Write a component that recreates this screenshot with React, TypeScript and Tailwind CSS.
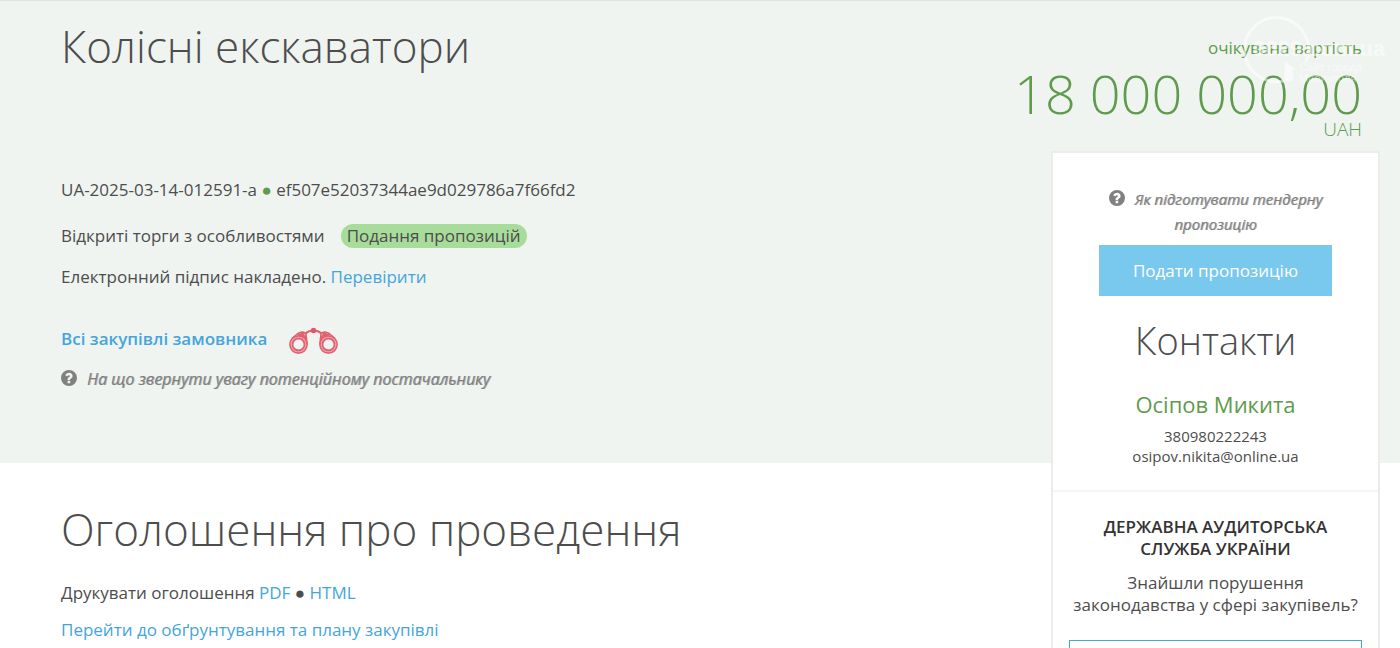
import React from "react";

const link = "text-[#45a5dc] hover:underline";

function QuestionIcon() {
  return (
    <svg viewBox="0 0 16 16" className="inline-block size-4 align-[-1px] text-[#808080]" fill="currentColor" aria-hidden="true">
      <path
        fillRule="evenodd"
        d="M8 0a8 8 0 1 1 0 16A8 8 0 0 1 8 0ZM6.600 10.800v2.400h2.600v-2.400H6.600ZM4.300 5.300l2 1.100c.3-.8.8-1.200 1.500-1.200.7 0 1.100.3 1.100.8 0 .5-.3.800-1 1.200-.9.500-1.300 1.100-1.300 2v.7h2.500v-.4c0-.4.3-.6.9-1 .9-.5 1.600-1.300 1.600-2.500C11.600 4 10.200 2.700 8.100 2.700c-1.800 0-3.100.9-3.800 2.600Z"
      />
    </svg>
  );
}

function Binoculars() {
  return (
    <svg viewBox="0 0 50 28" className="h-7 w-[50px]" fill="none" stroke="#e2606f" aria-hidden="true">
      <circle cx="9.500" cy="17.500" r="8.600" strokeWidth="1.600" />
      <circle cx="9.500" cy="17.500" r="6" strokeWidth="1.800" />
      <circle cx="39.500" cy="17.500" r="8.600" strokeWidth="1.600" />
      <circle cx="39.500" cy="17.500" r="6" strokeWidth="1.800" />
      <circle cx="9.500" cy="17.500" r="7.400" strokeWidth="1" strokeOpacity="0.5" />
      <circle cx="39.500" cy="17.500" r="7.400" strokeWidth="1" strokeOpacity="0.5" />
      <path strokeWidth="1.600" d="M3 11.500 9 6.500c3-2 7-2 8 1l1 10M46 11.500l-6-5c-3-2-7-2-8 1l-1 10" />
      <path strokeWidth="2.400" d="M9 8c4-1 7 1 8.500 4.500M40 8c-4-1-7 1-8.500 4.500M11.500 6l4 1.500M37.500 6l-4 1.500" />
      <path strokeWidth="2" d="M16.500 6.500c2-1.800 4.500-3 8-3s6 1.200 8 3" />
      <circle cx="24.500" cy="3.500" r="2.700" fill="#e0566a" stroke="none" />
    </svg>
  );
}

function Watermark() {
  return (
    <div className="pointer-events-none absolute top-4 right-[10px] font-['Liberation_Sans',sans-serif] text-white/50">
      <svg viewBox="0 0 146 70" className="h-[70px] w-[146px]" fill="none" aria-hidden="true">
        <path d="M44 63.500A32 32 0 1 1 62 46" stroke="currentColor" strokeWidth="3" />
        <path d="m41 46 11 7-4 1 2 8-4 4-6-4Z" fill="currentColor" />
        <text x="9" y="40" fontSize="22" fontWeight="700" fill="currentColor">0629.com.ua</text>
        <text x="55" y="55" fontSize="11" fill="currentColor">Сайт города</text>
        <text x="55" y="66" fontSize="11" fill="currentColor">Мариуполя</text>
      </svg>
    </div>
  );
}

export default function App() {
  return (
    <div className="relative grid grid-cols-[minmax(0,1fr)_366px] overflow-x-clip bg-white font-['Open_Sans','Noto_Sans',sans-serif] text-[17px] leading-6 text-[#4d4d4d]">
      <header className="col-span-2 col-start-1 row-start-1 border-t border-[#e0e3e1] bg-[#eff4f1] pt-[15px] pr-[380px] pb-[72px] pl-[61px]">
        <h1 className="text-[44px] leading-[60px] font-light">Колісні екскаватори</h1>
        <p className="mt-[102px]">
          UA-2025-03-14-012591-a <span className="text-[#5f9b4c]">●</span> ef507e52037344ae9d029786a7f66fd2
        </p>
        <p className="mt-[22px]">
          Відкриті торги з особливостями
          <span className="ml-4 inline-block rounded-full bg-[#a8dc9a] px-[6px]">Подання пропозицій</span>
        </p>
        <p className="mt-[17px]">
          Електронний підпис накладено. <a href="#verify" className={link}>Перевірити</a>
        </p>
        <div className="mt-9 flex items-start gap-[22px]">
          <a href="#customer" className="mt-[2px] font-semibold text-[#45a5dc] hover:underline">Всі закупівлі замовника</a>
          <div className="pt-[2px]"><Binoculars /></div>
        </div>
        <p className="mt-3 text-base leading-6 font-medium text-[#808080] italic">
          <QuestionIcon />
          <a href="#attention" className="ml-[10px] [text-shadow:1px_0_0_#80808099]">На що звернути увагу потенційному постачальнику</a>
        </p>
      </header>

      <main className="col-start-1 row-start-2 pt-9 pb-8 pl-[61px]">
        <h2 className="text-[44px] leading-[60px] font-light">Оголошення про проведення</h2>
        <p className="mt-[22px]">
          Друкувати оголошення <a href="#pdf" className={link}>PDF</a> ● <a href="#html" className={link}>HTML</a>
        </p>
        <p className="mt-[13px]">
          <a href="#plan" className={link}>Перейти до обґрунтування та плану закупівлі</a>
        </p>
      </main>

      <aside className="col-start-2 row-span-2 row-start-1 h-0 min-h-full">
        <div className="flex flex-col items-end pt-9 pr-[38px] text-[#5f9b4c]">
          <p>очікувана вартість</p>
          <p className="text-[54px] leading-[66px] font-light whitespace-nowrap">18 000 000,00</p>
          <p className="-mt-[7px] text-[19px] leading-5 font-light">UAH</p>
        </div>
        <div className="mt-3 mr-5 ml-[17px] border-2 border-[#ebedec] bg-white text-center">
          <section className="border-b-2 border-[#f5f5f5] px-[46px] pt-[34px] pb-6">
            <p className="text-[15px] leading-[25px] font-medium text-[#808080] italic">
              <QuestionIcon />
              <a href="#prepare" className="ml-[10px] [text-shadow:1px_0_0_#80808099]">Як підготувати тендерну пропозицію</a>
            </p>
            <button type="button" className="mt-2 h-[51px] w-full cursor-pointer bg-[#79c8ee] text-white">Подати пропозицію</button>
            <h2 className="mt-[18px] text-[38px] leading-[52px] font-light">Контакти</h2>
            <h3 className="mt-[22px] text-[22px] leading-8 text-[#5f9b4c]">Осіпов Микита</h3>
            <p className="mt-[6px] text-[15px] leading-5">380980222243</p>
            <p className="text-[15px] leading-5">osipov.nikita@online.ua</p>
          </section>
          <section className="px-4 pt-6">
            <h3 className="text-[17px] leading-[22px] font-semibold text-[#333]">ДЕРЖАВНА АУДИТОРСЬКА СЛУЖБА УКРАЇНИ</h3>
            <p className="mt-3 text-[17px] leading-[22px]">Знайшли порушення законодавства у сфері закупівель?</p>
            <button type="button" aria-label="Повідомити" className="mt-6 h-10 w-full border border-[#45a5dc] bg-white" />
          </section>
        </div>
      </aside>
      <Watermark />
    </div>
  );
}
